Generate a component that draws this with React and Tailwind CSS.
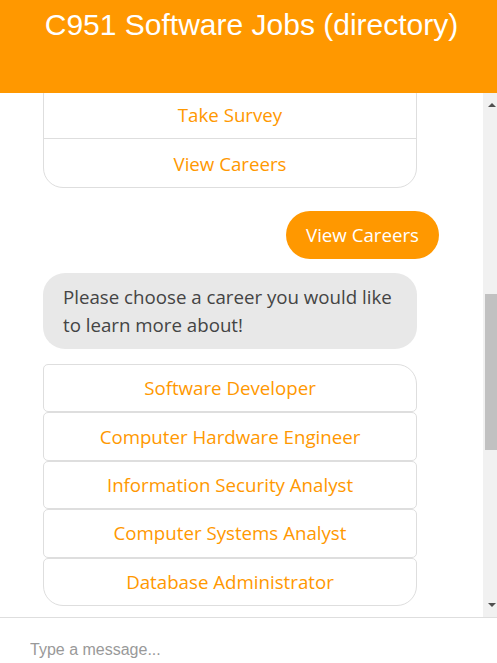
import React, { useEffect, useRef } from 'react';

const careers = [
  'Software Developer',
  'Computer Hardware Engineer',
  'Information Security Analyst',
  'Computer Systems Analyst',
  'Database Administrator',
];

const BotBubble = ({ children }) => (
  <div className="ml-[43px] w-[374px] rounded-[22px] bg-[#e8e8e8] px-5 py-[10px] text-[18.7px] leading-[28px] text-[#444]">
    {children}
  </div>
);

const UserBubble = ({ children }) => (
  <div className="flex justify-end pr-[44px]">
    <div className="rounded-full bg-[#ff9800] px-5 py-[10px] text-[18.7px] leading-[28px] text-white">
      {children}
    </div>
  </div>
);

const QuickReplies = ({ items }) => (
  <div className="ml-[43px] w-[374px] divide-y divide-[#dedede] rounded-b-[20px] rounded-t-[5px] border border-[#dedede]">
    {items.map((item) => (
      <div key={item} className="flex h-[48.5px] items-center justify-center pt-[2px] text-[18.7px] text-[#ff9800]">
        {item}
      </div>
    ))}
  </div>
);

// static look of the classic scrollbar seen in the screenshot
const ScrollTrack = () => (
  <div className="relative w-[14px] shrink-0 bg-[#f1f1f1]">
    <svg className="absolute left-0 top-[9px]" width="14" height="6" viewBox="0 0 14 6">
      <polygon points="5,5 9,1 13,5" fill="#505050" />
    </svg>
    <div className="absolute left-[2px] top-[201px] h-[156px] w-[12px] bg-[#c1c1c1]" />
    <svg className="absolute left-0 top-[509px]" width="14" height="6" viewBox="0 0 14 6">
      <polygon points="5,1 13,1 9,5" fill="#505050" />
    </svg>
  </div>
);

export default function App() {
  const scrollRef = useRef(null);
  const listRef = useRef(null);

  useEffect(() => {
    if (scrollRef.current && listRef.current) {
      scrollRef.current.scrollTop = listRef.current.offsetTop - 271;
    }
  }, []);

  return (
    <div className="flex h-[663px] w-[497px] flex-col bg-white font-['Open_Sans',sans-serif]">
      {/* Header */}
      <div className="h-[93px] shrink-0 bg-[#ff9800] pl-[6px] pt-[8px] text-center font-['Liberation_Sans',Arial,sans-serif] text-[30px] leading-[34px] text-white">
        C951 Software Jobs (directory)
      </div>

      {/* Messages */}
      <div className="flex min-h-0 flex-1">
        <div ref={scrollRef} className="relative flex-1 overflow-y-scroll [scrollbar-width:none]">
          <div className="flex flex-col pt-[14px] pb-[14px]">
            <BotBubble>Hi there! Welcome to the C951 Software Jobs directory.</BotBubble>
            <div className="h-[14px]" />
            <BotBubble>I can help you explore careers in the software and computing field.</BotBubble>
            <div className="h-[14px]" />
            <BotBubble>What would you like to do today?</BotBubble>
            <div className="h-[15px]" />
            <QuickReplies items={['Take Survey', 'View Careers']} />
            <div className="h-[23px]" />
            <UserBubble>Take Survey</UserBubble>
            <div className="h-[14px]" />
            <BotBubble>Sorry, the survey is not available right now. Please try again later.</BotBubble>
            <div className="h-[15px]" />
            <QuickReplies items={['Take Survey', 'View Careers']} />
            <div className="h-[23px]" />
            <UserBubble>View Careers</UserBubble>
            <div className="h-[14px]" />
            <BotBubble>Please choose a career you would like to learn more about!</BotBubble>
            <div className="h-[15px]" />
            <div ref={listRef} className="ml-[43px] flex w-[374px] flex-col">
              {careers.map((c, i) => (
                <div
                  key={c}
                  className={`flex h-[48.4px] items-center justify-center rounded-[5px] border border-[#dedede] text-[18.7px] text-[#ff9800] ${
                    i === 0 ? 'rounded-tr-[20px]' : ''
                  } ${i === careers.length - 1 ? 'rounded-b-[20px]' : ''}`}
                >
                  {c}
                </div>
              ))}
            </div>
            <div className="h-[24px]" />
            <UserBubble>Software Developer</UserBubble>
            <div className="h-[14px]" />
            <BotBubble>
              Software developers design, build and test computer programs and applications. They work closely with
              users to understand their needs and turn them into working software.
            </BotBubble>
            <div className="h-[14px]" />
            <BotBubble>Would you like to see another career?</BotBubble>
            <div className="h-[15px]" />
            <QuickReplies items={['Take Survey', 'View Careers']} />
          </div>
        </div>
        <ScrollTrack />
      </div>

      {/* Input */}
      <div className="h-[46px] shrink-0 border-t border-[#dedede]">
        <input
          type="text"
          placeholder="Type a message..."
          className="h-full w-full pl-[30px] pt-[18px] font-['Liberation_Sans',Arial,sans-serif] text-[16px] text-[#333] outline-none placeholder:text-[#999]"
        />
      </div>
    </div>
  );
}
